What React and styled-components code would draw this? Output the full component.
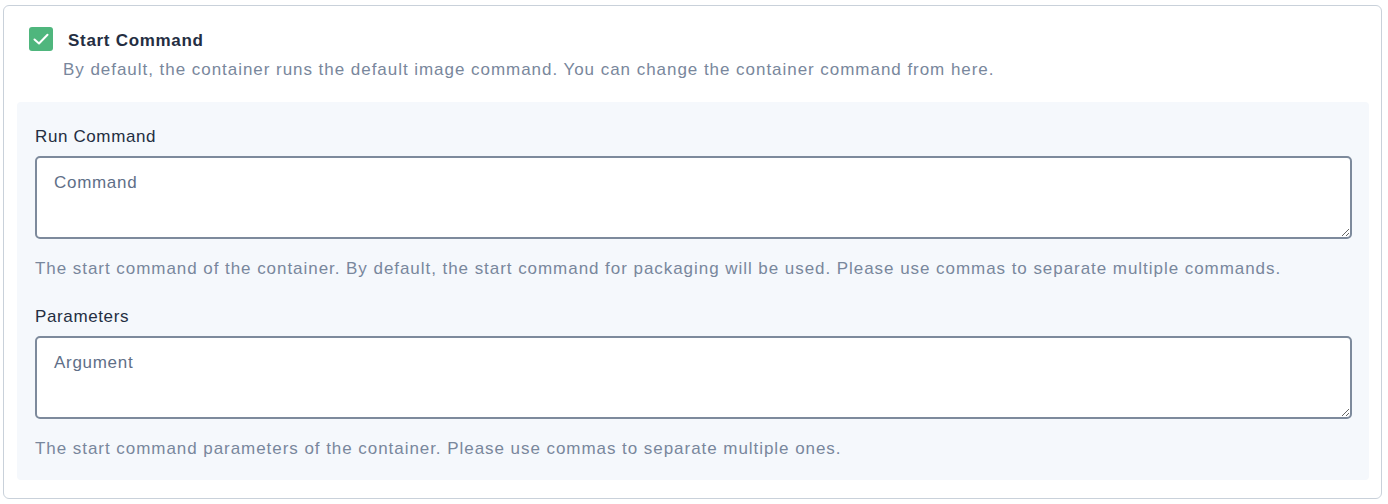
import React from "react";
import styled, { createGlobalStyle } from "styled-components";

const Global = createGlobalStyle`
  html, body { margin: 0; padding: 0; background: #ffffff; }
  body { font-family: "Liberation Sans", Arial, sans-serif; }
  * { box-sizing: border-box; }
`;

const Card = styled.div`
  margin: 5px 6px 0 3px;
  border: 1.5px solid #c9d1da;
  border-radius: 6px;
  padding: 21px 12px 18px 13px;
  height: 494px;
`;

const Header = styled.div`
  padding-left: 12px;
`;

const TitleRow = styled.div`
  display: flex;
  align-items: center;
  gap: 15px;
  height: 24px;
`;

const Check = styled.span`
  width: 24px;
  height: 24px;
  border-radius: 3px;
  background: #4fb67d;
  display: inline-flex;
  align-items: center;
  justify-content: center;
  flex: none;
`;

const Title = styled.span`
  font-size: 17px;
  font-weight: 700;
  letter-spacing: 0.7px;
  color: #242e42;
  line-height: 24px;
  padding-top: 4px;
`;

const Desc = styled.p`
  margin: 9px 0 0 34px;
  font-size: 17px;
  line-height: 20px;
  letter-spacing: 0.96px;
  color: #79879c;
`;

const Panel = styled.div`
  margin-top: 22px;
  background: #f5f8fc;
  border-radius: 4px;
  padding: 25px 17px 21px 18px;
`;

const Field = styled.div`
  & + & { margin-top: 28px; }
`;

const Label = styled.div`
  font-size: 17px;
  line-height: 20px;
  letter-spacing: 0.62px;
  color: #242e42;
`;

const Area = styled.textarea`
  display: block;
  width: 100%;
  height: 83px;
  margin-top: 9px;
  border: 2px solid #7d8a9c;
  border-radius: 5px;
  padding: 15px 17px;
  font-family: "Liberation Sans", Arial, sans-serif;
  font-size: 17px;
  line-height: 20px;
  letter-spacing: 0.7px;
  color: #242e42;
  background: #ffffff;
  resize: vertical;
  outline: none;
  &::placeholder { color: #5f6f88; opacity: 1; }
`;

const Help = styled.div`
  margin-top: 20px;
  font-size: 17px;
  line-height: 20px;
  letter-spacing: 0.95px;
  color: #79879c;
`;

export default function App() {
  return (
    <>
      <Global />
      <Card>
        <Header>
          <TitleRow>
            <Check>
              <svg width="24" height="24" viewBox="0 0 24 24" fill="none">
                <path d="M5.5 12.5 L10 16.5 L18.5 7.8" stroke="#fff" strokeWidth="2" strokeLinecap="round" strokeLinejoin="round" />
              </svg>
            </Check>
            <Title>Start Command</Title>
          </TitleRow>
          <Desc>By default, the container runs the default image command. You can change the container command from here.</Desc>
        </Header>
        <Panel>
          <Field>
            <Label>Run Command</Label>
            <Area placeholder="Command" />
            <Help>The start command of the container. By default, the start command for packaging will be used. Please use commas to separate multiple commands.</Help>
          </Field>
          <Field>
            <Label>Parameters</Label>
            <Area placeholder="Argument" />
            <Help>The start command parameters of the container. Please use commas to separate multiple ones.</Help>
          </Field>
        </Panel>
      </Card>
    </>
  );
}
